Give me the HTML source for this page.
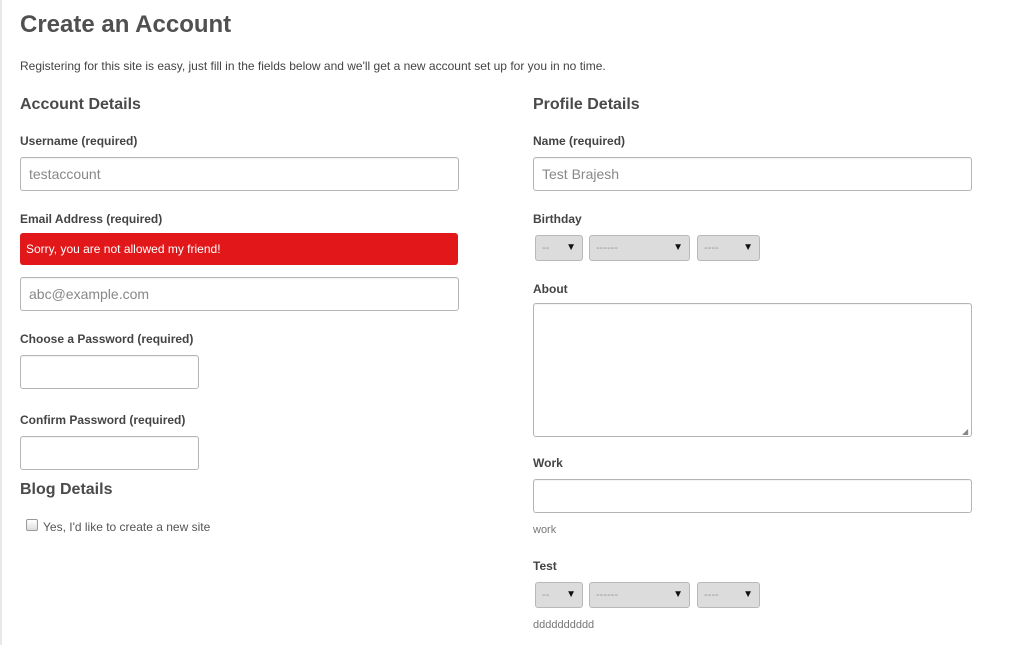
<!DOCTYPE html>
<html><head><style>
body{margin:0;width:1019px;height:645px;background:#fff;font-family:"Liberation Sans",sans-serif;color:#4a4a4a;position:relative;overflow:hidden}
.a{position:absolute;white-space:nowrap}
.lb{font-size:12px;font-weight:bold;color:#444}
h1,h2{margin:0;font-weight:bold}
.in{position:absolute;border:1px solid #b5b5b5;border-radius:3px;box-sizing:border-box;background:#fff;font-size:14px;color:#888;padding-left:8px;line-height:32px;box-shadow:inset 0 1px 1px rgba(0,0,0,.05)}
.sel{position:absolute;height:26px;box-sizing:border-box;border:1px solid #b8b8b8;border-radius:3px;background:#dcdcdc;font-size:11px;color:#999;line-height:24px;padding-left:6px}
.sel:after{content:"▼";position:absolute;right:6px;top:0;font-size:10px;color:#111}
.sm{font-size:11px;color:#777}
</style></head><body>
<div style="position:absolute;left:0;top:0;width:2px;height:645px;background:#e8e8e8"></div>
<h1 class="a" style="left:20px;top:11px;font-size:24px;color:#505050">Create an Account</h1>
<div class="a" style="left:20px;top:59px;font-size:12px;color:#444">Registering for this site is easy, just fill in the fields below and we'll get a new account set up for you in no time.</div>
<h2 class="a" style="left:20px;top:96px;font-size:16px">Account Details</h2>
<div class="a lb" style="left:20px;top:134px">Username (required)</div>
<div class="in" style="left:20px;top:157px;width:439px;height:34px">testaccount</div>
<div class="a lb" style="left:20px;top:212px">Email Address (required)</div>
<div class="a" style="left:20px;top:233px;width:438px;height:32px;background:#e2171a;border-radius:3px;color:#fff;font-size:12px;line-height:32px;padding-left:6px;box-sizing:border-box">Sorry, you are not allowed my friend!</div>
<div class="in" style="left:20px;top:277px;width:439px;height:34px">abc@example.com</div>
<div class="a lb" style="left:20px;top:332px">Choose a Password (required)</div>
<div class="in" style="left:20px;top:355px;width:179px;height:34px"></div>
<div class="a lb" style="left:20px;top:413px">Confirm Password (required)</div>
<div class="in" style="left:20px;top:436px;width:179px;height:34px"></div>
<h2 class="a" style="left:20px;top:481px;font-size:16px">Blog Details</h2>
<div class="a" style="left:26px;top:519px;width:10px;height:10px;border:1px solid #999;border-radius:2px;background:linear-gradient(#fff,#ddd)"></div>
<div class="a" style="left:43px;top:520px;font-size:12px;color:#555">Yes, I'd like to create a new site</div>

<h2 class="a" style="left:533px;top:96px;font-size:16px">Profile Details</h2>
<div class="a lb" style="left:533px;top:134px">Name (required)</div>
<div class="in" style="left:533px;top:157px;width:439px;height:34px">Test Brajesh</div>
<div class="a lb" style="left:533px;top:212px">Birthday</div>
<div class="sel" style="left:535px;top:235px;width:48px">--</div>
<div class="sel" style="left:589px;top:235px;width:101px">------</div>
<div class="sel" style="left:697px;top:235px;width:63px">----</div>
<div class="a lb" style="left:533px;top:282px">About</div>
<div class="in" style="left:533px;top:303px;width:439px;height:134px"></div>
<div class="a" style="left:962px;top:427px;font-size:8px;color:#888">◢</div>
<div class="a lb" style="left:533px;top:456px">Work</div>
<div class="in" style="left:533px;top:479px;width:439px;height:34px"></div>
<div class="a sm" style="left:533px;top:524px">work</div>
<div class="a lb" style="left:533px;top:559px">Test</div>
<div class="sel" style="left:535px;top:582px;width:48px">--</div>
<div class="sel" style="left:589px;top:582px;width:101px">------</div>
<div class="sel" style="left:697px;top:582px;width:63px">----</div>
<div class="a sm" style="left:533px;top:619px">dddddddddd</div>
</body></html>
